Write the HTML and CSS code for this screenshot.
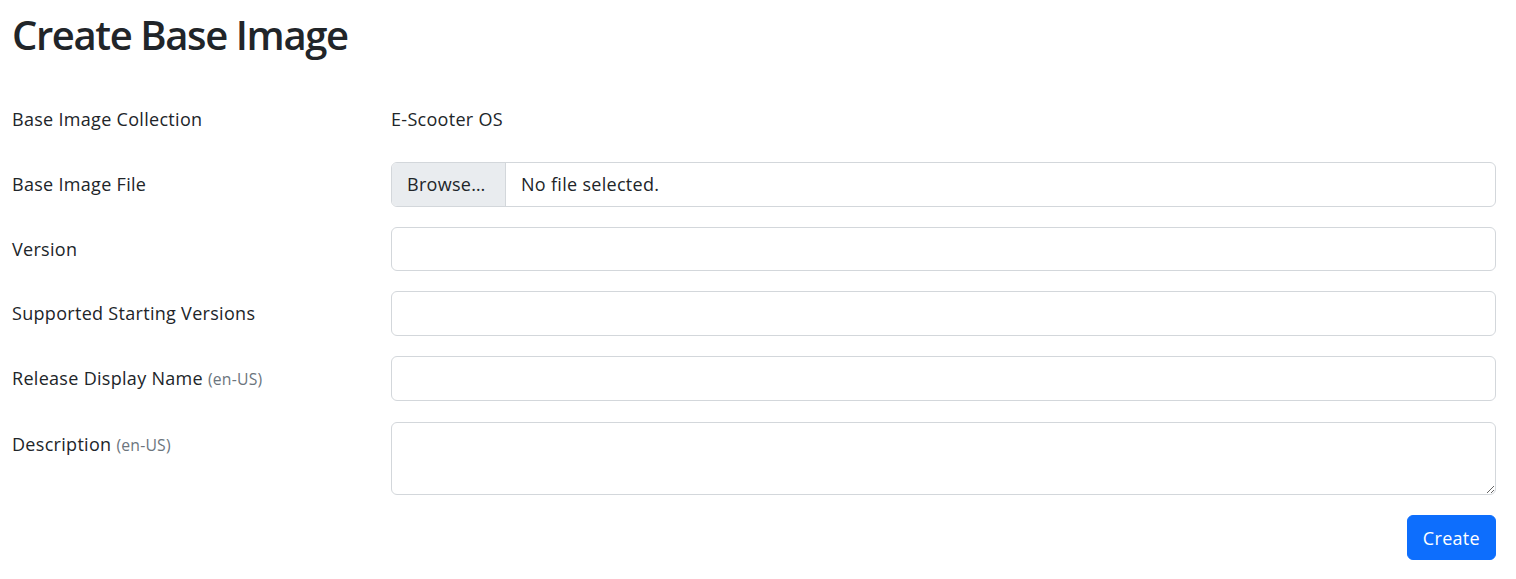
FILE: index.html
```html
<!DOCTYPE html>
<html lang="en">
<head>
<meta charset="utf-8">
<title>Create Base Image</title>
<link rel="stylesheet" href="styles.css">
</head>
<body>
<main class="page">
  <h1 class="title">Create Base Image</h1>
  <form class="form">
    <div class="label">Base Image Collection</div>
    <div class="value">E-Scooter OS</div>

    <label class="label" for="file">Base Image File</label>
    <div class="file">
      <span class="file-btn">Browse…</span>
      <span class="file-name">No file selected.</span>
    </div>

    <label class="label" for="version">Version</label>
    <input class="control" id="version" type="text">

    <label class="label" for="starting">Supported Starting Versions</label>
    <input class="control" id="starting" type="text">

    <label class="label" for="display">Release Display Name <span class="muted">(en-US)</span></label>
    <input class="control" id="display" type="text">

    <label class="label" for="desc">Description <span class="muted">(en-US)</span></label>
    <textarea class="control area" id="desc"></textarea>

    <div class="actions">
      <button class="btn" type="button">Create</button>
    </div>
  </form>
</main>
</body>
</html>
```

FILE: styles.css
```css
html, body {
  margin: 0;
  padding: 0;
  background: #fff;
}

body {
  font-family: "Open Sans", "Noto Sans", sans-serif;
  font-size: 18px;
  letter-spacing: 0.3px;
  color: #212529;
}

.page {
  padding: 11px 20px 0 12px;
}

.title {
  margin: 0 0 38px 0;
  font-size: 40px;
  line-height: 48px;
  font-weight: 600;
  letter-spacing: -1.4px;
  color: #212529;
}

.form {
  display: grid;
  grid-template-columns: 379px 1fr;
  row-gap: 20px;
  align-items: start;
}

.label {
  padding-top: 1px;
  line-height: 43.75px;
  color: #212529;
}

.muted {
  font-size: 15.75px;
  letter-spacing: 0.2px;
  color: #6c757d;
}

.value {
  padding-top: 1px;
  line-height: 43.75px;
}

.control {
  display: block;
  box-sizing: border-box;
  width: 100%;
  height: 44.75px;
  margin: 0;
  padding: 0 15px;
  border: 1px solid #d3d7db;
  border-radius: 6px;
  background: #fff;
  font-family: inherit;
  font-size: 18px;
  color: #212529;
  outline: none;
}

.area {
  height: 73.5px;
  padding: 10px 15px;
  resize: vertical;
}

.file {
  display: flex;
  box-sizing: border-box;
  height: 44.75px;
  border: 1px solid #d3d7db;
  border-radius: 6px;
  overflow: hidden;
}

.file-btn {
  box-sizing: border-box;
  width: 114px;
  padding: 1px 0 0 15px;
  line-height: 41.75px;
  background: #e9ecef;
  border-right: 1px solid #d3d7db;
}

.file-name {
  padding: 1px 0 0 15px;
  line-height: 41.75px;
}

.actions {
  grid-column: 2;
  display: flex;
  justify-content: flex-end;
}

.btn {
  height: 45px;
  padding: 0 15px;
  border: 1px solid #0d6efd;
  border-radius: 6px;
  background: #0d6efd;
  color: #fff;
  font-family: inherit;
  font-size: 18px;
  letter-spacing: 0.3px;
  cursor: pointer;
}
```
